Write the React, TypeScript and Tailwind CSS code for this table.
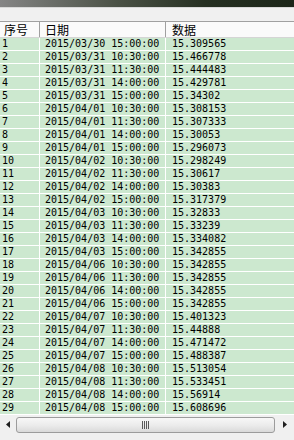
import React from "react";

const rows: [string, string][] = [
  ["2015/03/30 15:00:00", "15.309565"],
  ["2015/03/31 10:30:00", "15.466778"],
  ["2015/03/31 11:30:00", "15.444483"],
  ["2015/03/31 14:00:00", "15.429781"],
  ["2015/03/31 15:00:00", "15.34302"],
  ["2015/04/01 10:30:00", "15.308153"],
  ["2015/04/01 11:30:00", "15.307333"],
  ["2015/04/01 14:00:00", "15.30053"],
  ["2015/04/01 15:00:00", "15.296073"],
  ["2015/04/02 10:30:00", "15.298249"],
  ["2015/04/02 11:30:00", "15.30617"],
  ["2015/04/02 14:00:00", "15.30383"],
  ["2015/04/02 15:00:00", "15.317379"],
  ["2015/04/03 10:30:00", "15.32833"],
  ["2015/04/03 11:30:00", "15.33239"],
  ["2015/04/03 14:00:00", "15.334082"],
  ["2015/04/03 15:00:00", "15.342855"],
  ["2015/04/06 10:30:00", "15.342855"],
  ["2015/04/06 11:30:00", "15.342855"],
  ["2015/04/06 14:00:00", "15.342855"],
  ["2015/04/06 15:00:00", "15.342855"],
  ["2015/04/07 10:30:00", "15.401323"],
  ["2015/04/07 11:30:00", "15.44888"],
  ["2015/04/07 14:00:00", "15.471472"],
  ["2015/04/07 15:00:00", "15.488387"],
  ["2015/04/08 10:30:00", "15.513054"],
  ["2015/04/08 11:30:00", "15.533451"],
  ["2015/04/08 14:00:00", "15.56914"],
  ["2015/04/08 15:00:00", "15.608696"],
];

const mono = { fontFamily: '"DejaVu Sans Mono", monospace' };

export default function App() {
  return (
    <div className="w-[294px] h-[440px] bg-[#f0f0f0] flex flex-col overflow-hidden">
      {/* top dark band */}
      <div className="h-[7px] bg-[linear-gradient(to_right,#858585,#4a5145_40%,#263022_70%,#1c2619)]" />
      <div className="h-[1px] bg-[#d8d8d8]" />
      <div className="h-[13px] bg-[#f0f0f0]" />
      <div className="h-[1px] bg-[#a0a0a0]" />
      {/* header */}
      <div
        className="h-[16px] flex bg-[#fafafa] border-b border-[#d5d5d5] text-[12px] leading-[15px] text-black"
        style={{ fontFamily: '"Noto Sans CJK SC", sans-serif' }}
      >
        <div className="w-[40px] pl-[4px] border-r border-[#a0a0a0]">序号</div>
        <div className="w-[126px] pl-[5px] border-r border-[#a0a0a0]">日期</div>
        <div className="flex-1 pl-[6px]">数据</div>
      </div>
      {/* rows */}
      <div className="flex flex-col">
        {rows.map(([d, v], i) => (
          <div
            key={i}
            className="h-[13px] flex border-b border-white bg-[#cce8cf] text-[10px] leading-[12px] text-black"
            style={mono}
          >
            <div className="w-[40px] pl-[2px] border-r border-white whitespace-pre">{i + 1}</div>
            <div className="w-[126px] pl-[5px] border-r border-white whitespace-pre">{d}</div>
            <div className="flex-1 pl-[6px] whitespace-pre">{v}</div>
          </div>
        ))}
      </div>
      {/* horizontal scrollbar */}
      <div className="h-[19px] flex items-center bg-[#f0f0f0]">
        <div className="w-[16px] h-[17px] flex items-center justify-center">
          <svg width="4" height="7" viewBox="0 0 4 7">
            <path d="M4 0 L0 3.5 L4 7 Z" fill="#202020" />
          </svg>
        </div>
        <div className="w-[259px] h-[16px] rounded-[3px] border border-[#9c9c9c] bg-[linear-gradient(to_bottom,#f7f7f7,#ececec_50%,#dadada)] flex items-center justify-center">
          <svg width="8" height="8" viewBox="0 0 8 8">
            <path d="M0.5 0 V8 M2.5 0 V8 M4.5 0 V8 M6.5 0 V8" stroke="#5a5a5a" strokeWidth="1" />
          </svg>
        </div>
        <div className="flex-1 h-[17px] flex items-center justify-center">
          <svg width="4" height="7" viewBox="0 0 4 7">
            <path d="M0 0 L4 3.5 L0 7 Z" fill="#202020" />
          </svg>
        </div>
      </div>
      <div className="flex-1 bg-[#f0f0f0]" />
    </div>
  );
}
